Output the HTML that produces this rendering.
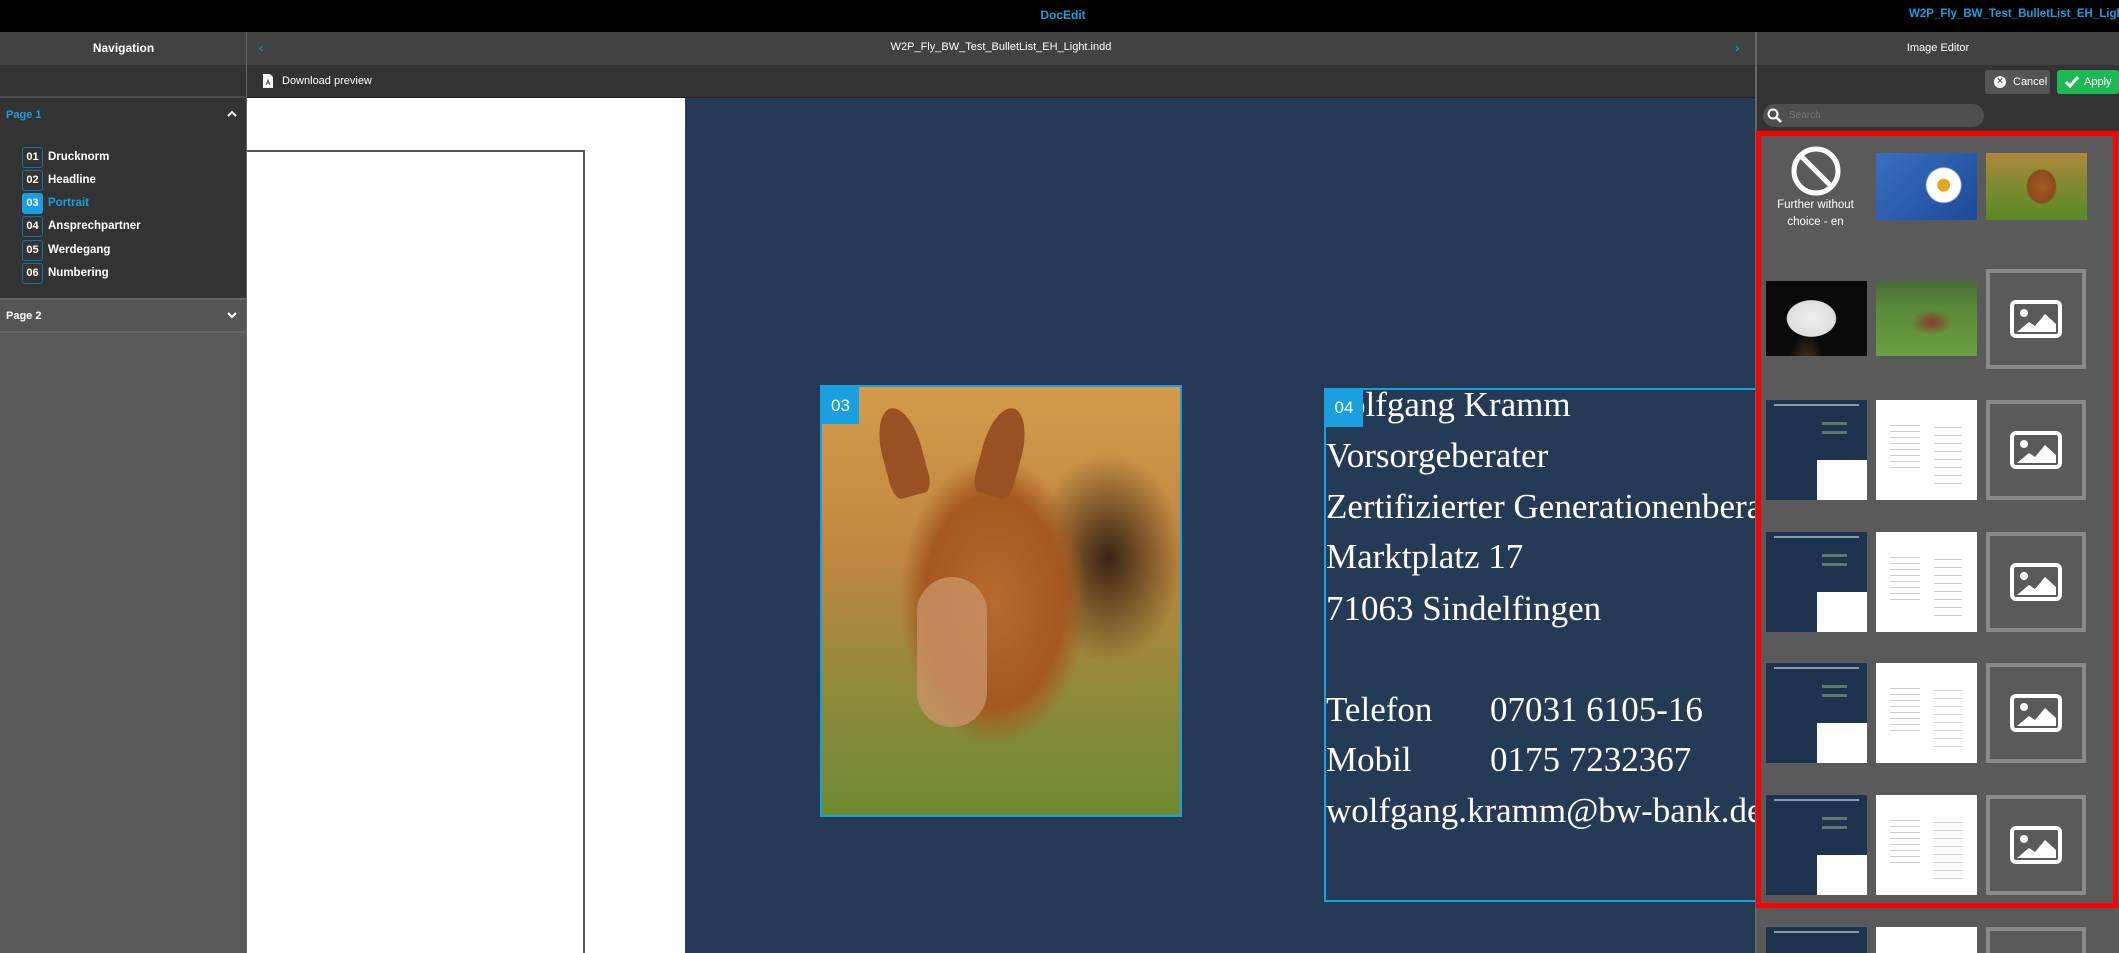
<!DOCTYPE html><html><head><meta charset="utf-8"><style>
*{box-sizing:border-box;margin:0;padding:0}
html,body{width:2119px;height:953px;overflow:hidden}
body{background:#5a5a5a;font-family:"Liberation Sans",sans-serif}
#w{position:relative;width:2119px;height:953px;overflow:hidden}
.a{position:absolute}
.nav-item{position:absolute;left:22px;height:22px;display:flex;align-items:center;color:#fff;font-size:11.5px;font-weight:bold}
.nav-item b{display:inline-block;width:21px;height:21px;border:1.5px solid #1d6f9a;border-radius:3px;text-align:center;line-height:18px;margin-right:5px;font-size:11px}
.th{position:absolute;width:101px;height:100px;overflow:hidden}
.ph{position:absolute;width:100px;height:100px;border:4px solid #8a8a8a;background:#5a5a5a}
.ph svg{position:absolute;left:20px;top:27px}
.dk{background:#1e3350}
.dk:after{content:"";position:absolute;right:0;bottom:0;width:50%;height:40%;background:#fff}
.dk i{position:absolute;left:55%;top:22px;width:25px;height:12px;border-top:3px solid #7fae7a;border-bottom:3px solid #7fae7a;opacity:.6}
.dk s{position:absolute;left:8px;top:4px;width:85px;height:2px;background:#8899aa}
.wh{background:#fff}
.wh:before{content:"";position:absolute;left:14px;top:20px;width:30px;height:50px;background:repeating-linear-gradient(#fff 0 5px,#ccc 5px 6px)}
.wh:after{content:"";position:absolute;left:58px;top:20px;width:28px;height:70px;background:repeating-linear-gradient(#fff 0 7px,#ccc 7px 8px)}
.txt{position:absolute;left:2px;font-family:"Liberation Serif",serif;font-size:35px;color:#fff;white-space:nowrap}
</style></head><body><div id="w">
<div class="a" style="left:0;top:0;width:2119px;height:32px;background:#000"></div>
<div class="a" style="left:1013px;top:8px;width:100px;text-align:center;color:#1a9fe0;font-weight:bold;font-size:12px">DocEdit</div>
<div class="a" style="left:1909px;top:8px;width:210px;overflow:hidden;color:#1a9fe0;font-weight:bold;font-size:11.5px;white-space:nowrap">W2P_Fly_BW_Test_BulletList_EH_Light.indd</div>
<div class="a" style="left:0;top:32px;width:247px;height:33px;background:#424242;color:#fff;font-weight:bold;font-size:12px;text-align:center;line-height:33px">Navigation</div>
<div class="a" style="left:0;top:65px;width:247px;height:33px;background:#333;border-bottom:2px solid #4a4a4a"></div>
<div class="a" style="left:0;top:98px;width:247px;height:200px;background:#333"></div>
<div class="a" style="left:6px;top:109px;color:#1a9fe0;font-weight:bold;font-size:11px">Page 1</div>
<svg class="a" style="left:227px;top:110px" width="10" height="8"><path d="M1 6l4-4 4 4" stroke="#fff" stroke-width="2" fill="none"/></svg>
<div class="nav-item" style="top:146px"><b>01</b>Drucknorm</div>
<div class="nav-item" style="top:169px"><b>02</b>Headline</div>
<div class="nav-item" style="top:192px;color:#1a9fe0"><b style="background:#1a9fe0;border-color:#1a9fe0;color:#fff">03</b>Portrait</div>
<div class="nav-item" style="top:215px"><b>04</b>Ansprechpartner</div>
<div class="nav-item" style="top:239px"><b>05</b>Werdegang</div>
<div class="nav-item" style="top:262px"><b>06</b>Numbering</div>
<div class="a" style="left:0;top:298px;width:247px;height:35px;background:#555;border-top:2px solid #666;border-bottom:2px solid #666"></div>
<div class="a" style="left:6px;top:310px;color:#fff;font-weight:bold;font-size:11px">Page 2</div>
<svg class="a" style="left:227px;top:311px" width="10" height="8"><path d="M1 2l4 4 4-4" stroke="#fff" stroke-width="2" fill="none"/></svg>
<div class="a" style="left:246px;top:32px;width:1px;height:921px;background:#666"></div>
<div class="a" style="left:247px;top:32px;width:1508px;height:33px;background:#424242"></div>
<div class="a" style="left:259px;top:40px;color:#1a9fe0;font-size:13px">&#8249;</div>
<div class="a" style="left:1735px;top:40px;color:#1a9fe0;font-size:13px">&#8250;</div>
<div class="a" style="left:247px;top:41px;width:1508px;text-align:center;color:#fff;font-size:11px">W2P_Fly_BW_Test_BulletList_EH_Light.indd</div>
<div class="a" style="left:247px;top:65px;width:1508px;height:33px;background:#333;border-bottom:1px solid #222"></div>
<svg class="a" style="left:262px;top:73px" width="12" height="16"><path d="M1 1h7l3 3v11H1z" fill="#fff"/><path d="M4 12l2-5 2 5M5 10h3" stroke="#555" fill="none"/></svg>
<div class="a" style="left:282px;top:75px;color:#fff;font-size:11px">Download preview</div>
<div class="a" style="left:247px;top:98px;width:438px;height:855px;background:#fff"></div>
<div class="a" style="left:247px;top:150px;width:338px;height:803px;border-top:2px solid #555;border-right:2px solid #555"></div>
<div class="a" style="left:685px;top:98px;width:1070px;height:855px;background:#253a55"></div>
<div class="a" style="left:820px;top:385px;width:362px;height:432px;border:2px solid #1a9fe0;overflow:hidden;background:radial-gradient(ellipse 35% 45% at 48% 50%,#b86a2e 0,#a5581f 55%,transparent 75%),radial-gradient(ellipse 30% 35% at 80% 40%,#3a2414 0,transparent 70%),linear-gradient(#d39b4a 0,#c08640 40%,#8a8a3a 75%,#6d8a2f 100%)">
<div class="a" style="left:95px;top:190px;width:70px;height:150px;border-radius:40px;background:#c99266;opacity:.8"></div>
<div class="a" style="left:60px;top:20px;width:40px;height:90px;border-radius:50% 50% 20% 20%;background:#9a5224;transform:rotate(-15deg)"></div>
<div class="a" style="left:160px;top:20px;width:40px;height:90px;border-radius:50% 50% 20% 20%;background:#9a5224;transform:rotate(15deg)"></div>
</div>
<div class="a" style="left:822px;top:387px;width:37px;height:37px;background:#1a9fe0;color:#fff;font-size:17px;line-height:37px;text-align:center">03</div>
<div class="a" style="left:1324px;top:380px;width:431px;height:522px;overflow:hidden">
<div class="a" style="left:0;top:8px;width:450px;height:514px;border:2px solid #1a9fe0"></div>
<div class="txt" style="top:5px;left:24px">olfgang Kramm</div>
<div class="txt" style="top:56px">Vorsorgeberater</div>
<div class="txt" style="top:107px">Zertifizierter Generationenberater</div>
<div class="txt" style="top:157px">Marktplatz 17</div>
<div class="txt" style="top:209px">71063 Sindelfingen</div>
<div class="txt" style="top:310px">Telefon</div><div class="txt" style="top:310px;left:166px">07031 6105-16</div>
<div class="txt" style="top:360px">Mobil</div><div class="txt" style="top:360px;left:166px">0175 7232367</div>
<div class="txt" style="top:411px">wolfgang.kramm@bw-bank.de</div>
</div>
<div class="a" style="left:1325px;top:389px;width:38px;height:38px;background:#1a9fe0;color:#fff;font-size:17px;line-height:38px;text-align:center">04</div>
<div class="a" style="left:1755px;top:32px;width:364px;height:921px;background:#5a5a5a;border-left:2px solid #666"></div>
<div class="a" style="left:1757px;top:32px;width:362px;height:33px;background:#424242;color:#fff;font-size:11px;text-align:center;line-height:33px">Image Editor</div>
<div class="a" style="left:1757px;top:65px;width:362px;height:66px;background:#333"></div>
<div class="a" style="left:1985px;top:70px;width:65px;height:24px;background:#555;border-radius:3px;color:#fff;font-size:11px;line-height:24px;padding-left:28px">Cancel</div>
<div class="a" style="left:1994px;top:76px;width:12px;height:12px;border-radius:50%;background:#fff;color:#555;font-size:10px;line-height:12px;text-align:center;font-weight:bold">×</div>
<div class="a" style="left:2057px;top:70px;width:62px;height:24px;background:#1db954;border-radius:3px;color:#fff;font-size:11px;line-height:24px;padding-left:27px">Apply</div>
<svg class="a" style="left:2064px;top:75px" width="15" height="14"><path d="M2 7l4 4 8-9" stroke="#fff" stroke-width="3" fill="none"/></svg>
<div class="a" style="left:1763px;top:104px;width:221px;height:23px;background:#4f4f4f;border-radius:12px;color:#777;font-size:10px;line-height:23px;padding-left:26px">Search</div>
<svg class="a" style="left:1767px;top:108px" width="15" height="15"><circle cx="6" cy="6" r="4.5" stroke="#fff" stroke-width="2" fill="none"/><path d="M9 9l5 5" stroke="#fff" stroke-width="2.5"/></svg>
<svg class="a" style="left:1791px;top:146px" width="50" height="50"><circle cx="25" cy="25" r="22" stroke="#fff" stroke-width="5" fill="none"/><path d="M10 10l30 30" stroke="#fff" stroke-width="5"/></svg>
<div class="a" style="left:1765px;top:197px;width:101px;text-align:center;color:#fff;font-size:11.5px;line-height:17px">Further without choice - en</div>
<div class="th" style="left:1876px;top:153px;height:67px;background:radial-gradient(circle at 67% 48%,#e0a820 0,#e0a820 8%,#fff 9%,#fff 22%,transparent 24%),linear-gradient(135deg,#3a6fc2,#1d4a9a)"></div>
<div class="th" style="left:1986px;top:153px;height:67px;background:radial-gradient(ellipse 20% 35% at 55% 50%,#a55a22 0,#8a4a1e 70%,transparent 75%),linear-gradient(#b0883a 0,#7d8a30 50%,#5a8a25 100%)"></div>
<div class="th" style="left:1766px;top:281px;height:75px;background:radial-gradient(ellipse 40% 40% at 45% 50%,#eee 0,#ddd 60%,transparent 62%),radial-gradient(ellipse 25% 60% at 40% 110%,#4a3322 0,transparent 70%),#0a0a0a"></div>
<div class="th" style="left:1876px;top:281px;height:75px;background:radial-gradient(ellipse 30% 25% at 55% 55%,#8a3a2a 0,transparent 70%),linear-gradient(#4a6a3a 0,#5a8a3a 35%,#6aa040 100%)"></div>
<div class="ph" style="left:1986px;top:269px"><svg width="52" height="38"><rect x="2" y="2" width="48" height="34" rx="4" stroke="#fff" stroke-width="4" fill="none"/><circle cx="14" cy="13" r="4" fill="#fff"/><path d="M7 32l12-10 6 4 10-12 11 10v8z" fill="#fff"/></svg></div>
<div class="th dk" style="left:1766px;top:400px"><s></s><i></i></div><div class="th wh" style="left:1876px;top:400px"></div>
<div class="ph" style="left:1986px;top:400px"><svg width="52" height="38"><rect x="2" y="2" width="48" height="34" rx="4" stroke="#fff" stroke-width="4" fill="none"/><circle cx="14" cy="13" r="4" fill="#fff"/><path d="M7 32l12-10 6 4 10-12 11 10v8z" fill="#fff"/></svg></div>
<div class="th dk" style="left:1766px;top:532px"><s></s><i></i></div><div class="th wh" style="left:1876px;top:532px"></div>
<div class="ph" style="left:1986px;top:532px"><svg width="52" height="38"><rect x="2" y="2" width="48" height="34" rx="4" stroke="#fff" stroke-width="4" fill="none"/><circle cx="14" cy="13" r="4" fill="#fff"/><path d="M7 32l12-10 6 4 10-12 11 10v8z" fill="#fff"/></svg></div>
<div class="th dk" style="left:1766px;top:663px"><s></s><i></i></div><div class="th wh" style="left:1876px;top:663px"></div>
<div class="ph" style="left:1986px;top:663px"><svg width="52" height="38"><rect x="2" y="2" width="48" height="34" rx="4" stroke="#fff" stroke-width="4" fill="none"/><circle cx="14" cy="13" r="4" fill="#fff"/><path d="M7 32l12-10 6 4 10-12 11 10v8z" fill="#fff"/></svg></div>
<div class="th dk" style="left:1766px;top:795px"><s></s><i></i></div><div class="th wh" style="left:1876px;top:795px"></div>
<div class="ph" style="left:1986px;top:795px"><svg width="52" height="38"><rect x="2" y="2" width="48" height="34" rx="4" stroke="#fff" stroke-width="4" fill="none"/><circle cx="14" cy="13" r="4" fill="#fff"/><path d="M7 32l12-10 6 4 10-12 11 10v8z" fill="#fff"/></svg></div>
<div class="th" style="left:1766px;top:927px;height:26px;background:#1e3350"><div class="a" style="left:8px;top:4px;width:85px;height:2px;background:#8899aa"></div></div>
<div class="th" style="left:1876px;top:927px;height:26px;background:#fff"></div>
<div class="a" style="left:1986px;top:927px;width:100px;height:26px;border:4px solid #8a8a8a;border-bottom:0"></div>
<div class="a" style="left:1756px;top:131px;width:362px;height:777px;border:5px solid #f00"></div>
</div></body></html>
